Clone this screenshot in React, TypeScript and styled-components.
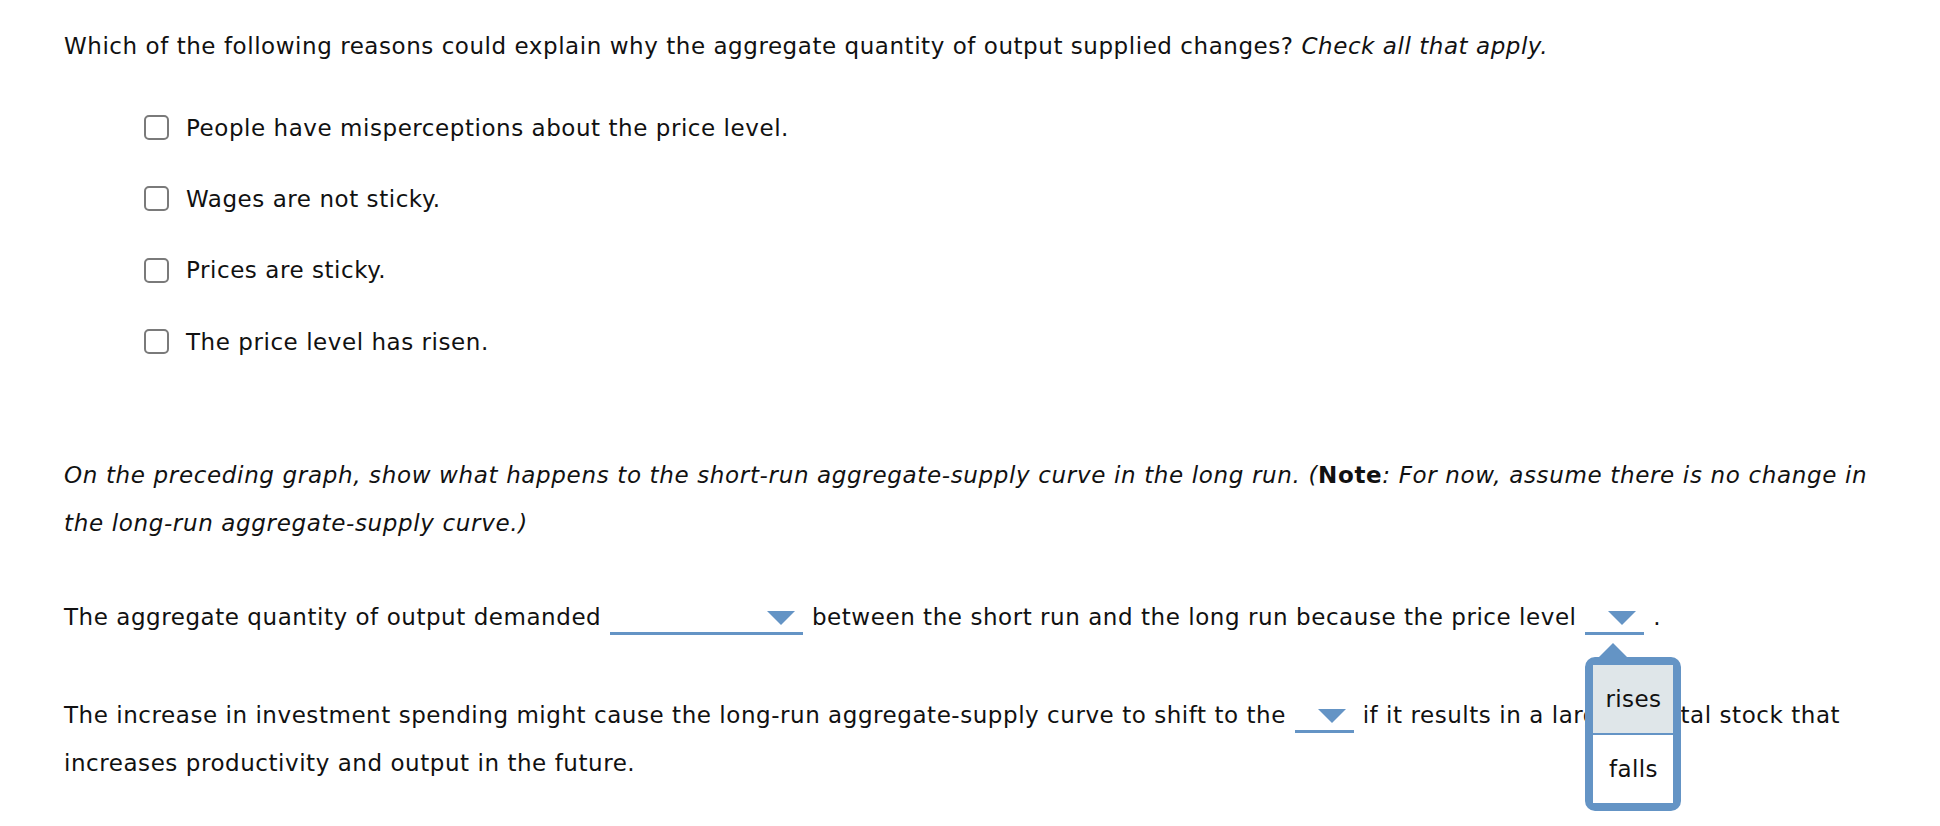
import React, { FunctionComponent } from 'react'
import styled, { createGlobalStyle } from 'styled-components'

const GlobalStyle = createGlobalStyle`
	html, body {
		margin: 0;
		padding: 0;
		background: #ffffff;
	}
	body {
		font-family: 'DejaVu Sans', Verdana, sans-serif;
		color: #111111;
	}
`

const BLUE = '#6494c5'

const Page = styled.div`
	box-sizing: border-box;
	width: 1890px;
	min-height: 826px;
	padding: 22px 0 40px 64px;
	font-size: 23px;
	letter-spacing: 0.55px;
	line-height: 48px;
`

const Question = styled.p`
	margin: 0;
`

const ChoiceList = styled.ul`
	list-style: none;
	margin: 22px 0 0;
	padding: 0 0 0 80px;
`

const ChoiceRow = styled.li`
	display: flex;
	align-items: center;
	height: 71.3px;
	gap: 17px;
`

const Box = styled.span`
	box-sizing: border-box;
	width: 25px;
	height: 25px;
	border: 2px solid #7a7a7a;
	border-radius: 5px;
	background: #fff;
	flex: none;
`

const Note = styled.p`
	margin: 74px 0 0;
	font-style: italic;
	letter-spacing: 0.65px;
`

const Upright = styled.span`
	font-style: normal;
`

const Statement = styled.p<{ $gap: number }>`
	margin: ${(p) => p.$gap}px 0 0;
`

const DropWrap = styled.span<{ $width: number }>`
	position: relative;
	box-sizing: border-box;
	display: inline-flex;
	justify-content: flex-end;
	align-items: flex-start;
	width: ${(p) => p.$width}px;
	height: 24px;
	margin: 0 1px 6px;
	padding: 0 8px 0 0;
	border-bottom: 3px solid ${BLUE};
	vertical-align: bottom;
`

const Arrow = styled.span`
	width: 0;
	height: 0;
	border-left: 14px solid transparent;
	border-right: 14px solid transparent;
	border-top: 14px solid ${BLUE};
`

const Menu = styled.div`
	position: absolute;
	left: 0;
	top: 46px;
	box-sizing: border-box;
	width: 96px;
	border: 8px solid ${BLUE};
	border-radius: 10px;
	background: #fff;
	line-height: normal;
	letter-spacing: 0.4px;
	z-index: 2;

	&::before {
		content: '';
		position: absolute;
		left: 6px;
		top: -22px;
		border-left: 14px solid transparent;
		border-right: 14px solid transparent;
		border-bottom: 14px solid ${BLUE};
	}
`

const Option = styled.div<{ $active?: boolean }>`
	box-sizing: border-box;
	height: 68px;
	display: flex;
	align-items: center;
	justify-content: center;
	background: ${(p) => (p.$active ? '#dfe6e9' : '#ffffff')};
	& + & {
		height: 70px;
		border-top: 2px solid ${BLUE};
	}
`

interface DropdownProps {
	width: number
	open?: boolean
}

const Dropdown: FunctionComponent<DropdownProps> = ({ width, open }) => (
	<DropWrap $width={width}>
		<Arrow />
		{open && (
			<Menu>
				<Option $active>rises</Option>
				<Option>falls</Option>
			</Menu>
		)}
	</DropWrap>
)

const choices = [
	'People have misperceptions about the price level.',
	'Wages are not sticky.',
	'Prices are sticky.',
	'The price level has risen.',
]

const App: FunctionComponent = () => (
	<>
		<GlobalStyle />
		<Page>
			<Question>
				Which of the following reasons could explain why the aggregate quantity of output supplied changes?{' '}
				<em>Check all that apply.</em>
			</Question>
			<ChoiceList>
				{choices.map((c) => (
					<ChoiceRow key={c}>
						<Box />
						<span>{c}</span>
					</ChoiceRow>
				))}
			</ChoiceList>
			<Note>
				On the preceding graph, show what happens to the short-run aggregate-supply curve in the long run. (
				<Upright>
					<strong>Note</strong>
				</Upright>
				: For now, assume there is no change in the long-run aggregate-supply curve.)
			</Note>
			<Statement $gap={46}>
				The aggregate quantity of output demanded <Dropdown width={193} /> between the short run and the long run
				because the price level <Dropdown width={59} open /> .
			</Statement>
			<Statement $gap={50}>
				The increase in investment spending might cause the long-run aggregate-supply curve to shift to the{' '}
				<Dropdown width={59} /> if it results in a larger capital stock that increases productivity and output in
				the future.
			</Statement>
		</Page>
	</>
)

export default App
